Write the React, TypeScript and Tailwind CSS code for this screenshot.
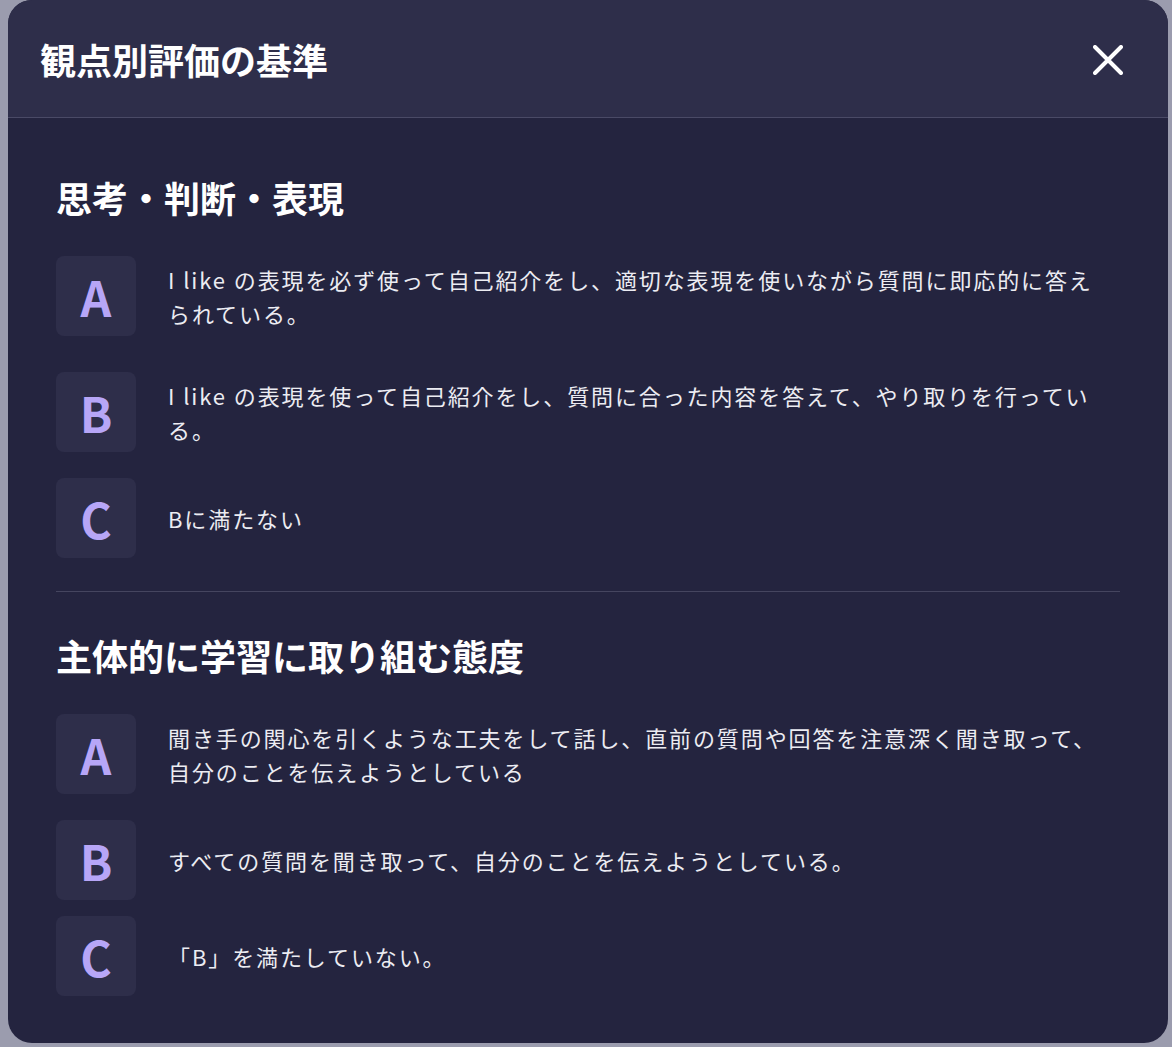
const sections = [
  {
    title: '思考・判断・表現',
    rows: [
      { grade: 'A', text: 'I like の表現を必ず使って自己紹介をし、適切な表現を使いながら質問に即応的に答えられている。' },
      { grade: 'B', text: 'I like の表現を使って自己紹介をし、質問に合った内容を答えて、やり取りを行っている。' },
      { grade: 'C', text: 'Bに満たない' },
    ],
  },
  {
    title: '主体的に学習に取り組む態度',
    rows: [
      { grade: 'A', text: '聞き手の関心を引くような工夫をして話し、直前の質問や回答を注意深く聞き取って、自分のことを伝えようとしている' },
      { grade: 'B', text: 'すべての質問を聞き取って、自分のことを伝えようとしている。' },
      { grade: 'C', text: '「B」を満たしていない。' },
    ],
  },
]

function Row({ grade, text }: { grade: string; text: string }) {
  return (
    <div className="flex items-center gap-8">
      <div className="flex h-20 w-20 shrink-0 items-center justify-center rounded-lg bg-[#2e2e4a]">
        <span className="text-[48px] font-bold leading-none text-[#b7a6f7]">{grade}</span>
      </div>
      <p className="py-4 pr-4 text-[22px] leading-[34px] tracking-[0.086em] text-[#ececf2]">{text}</p>
    </div>
  )
}

export default function App() {
  return (
    <div
      className="min-h-screen bg-[#9b9cae] pl-2 pr-1 pb-1"
      style={{ fontFamily: '"Noto Sans CJK JP", "Noto Sans", sans-serif' }}
    >
      <div className="overflow-hidden rounded-[24px] bg-[#24243f]">
        <div className="flex h-[118px] items-center justify-between border-b border-[#4a4a66] bg-[#2e2e4a] pl-8 pr-[45px]">
          <h1 className="text-[36px] font-bold leading-none text-white">観点別評価の基準</h1>
          <button type="button" aria-label="close" className="mt-0.5 text-white">
            <svg width="30" height="30" viewBox="0 0 30 30" fill="none" stroke="currentColor" strokeWidth="4" strokeLinecap="round">
              <path d="M2 2L28 28M28 2L2 28" />
            </svg>
          </button>
        </div>
        <div className="px-12 pt-[61px] pb-[47px]">
          {sections.map((s, i) => (
            <div key={s.title}>
              {i > 0 && <div className="mt-[33px] mb-[45px] h-px bg-[#45455f]" />}
              <h2 className="text-[36px] font-bold leading-none text-white">{s.title}</h2>
              <div className="mt-[31px] flex flex-col gap-4">
                {s.rows.map((r) => (
                  <Row key={r.grade} grade={r.grade} text={r.text} />
                ))}
              </div>
            </div>
          ))}
        </div>
      </div>
    </div>
  )
}
